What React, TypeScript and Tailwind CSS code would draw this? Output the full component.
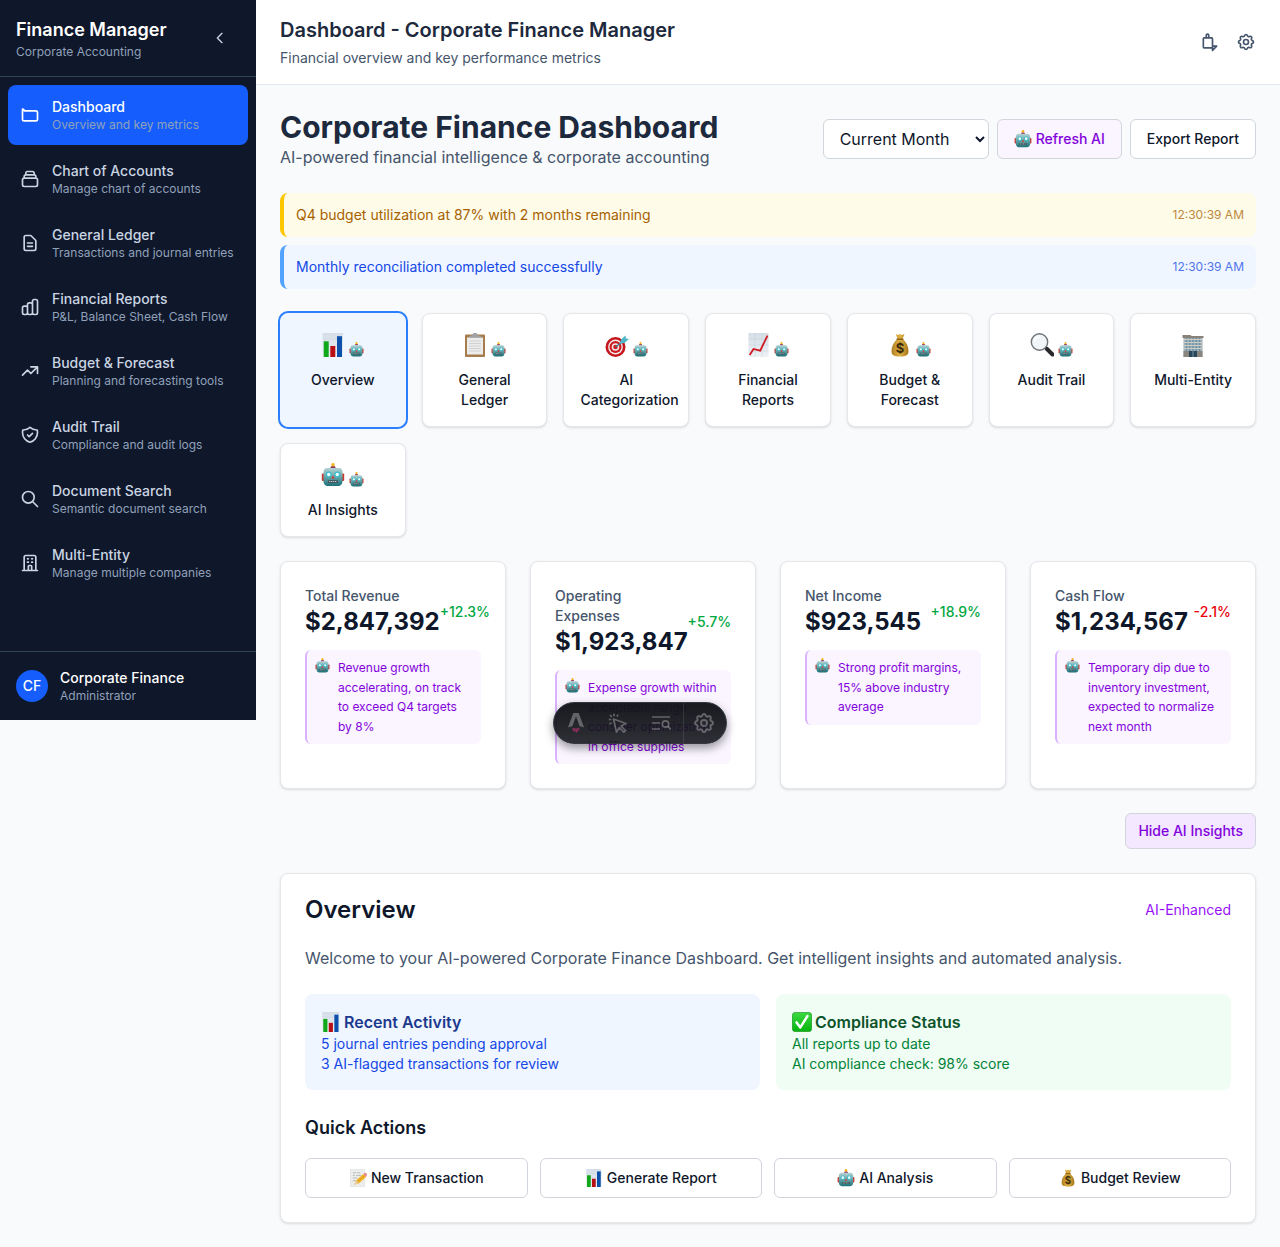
import React from "react";

const navItems = [
  { title: "Dashboard", sub: "Overview and key metrics", active: true, d: "M3 7v10a2 2 0 002 2h14a2 2 0 002-2V9a2 2 0 00-2-2H5a2 2 0 00-2-2z" },
  { title: "Chart of Accounts", sub: "Manage chart of accounts", d: "M19 11H5m14 0a2 2 0 012 2v6a2 2 0 01-2 2H5a2 2 0 01-2-2v-6a2 2 0 012-2m14 0V9a2 2 0 00-2-2M5 11V9a2 2 0 012-2m0 0V5a2 2 0 012-2h6a2 2 0 012 2v2M7 7h10" },
  { title: "General Ledger", sub: "Transactions and journal entries", d: "M9 12h6m-6 4h6m2 5H7a2 2 0 01-2-2V5a2 2 0 012-2h5.586a1 1 0 01.707.293l5.414 5.414a1 1 0 01.293.707V19a2 2 0 01-2 2z" },
  { title: "Financial Reports", sub: "P&L, Balance Sheet, Cash Flow", d: "M9 19v-6a2 2 0 00-2-2H5a2 2 0 00-2 2v6a2 2 0 002 2h2a2 2 0 002-2zm0 0V9a2 2 0 012-2h2a2 2 0 012 2v10m-6 0a2 2 0 002 2h2a2 2 0 002-2m0 0V5a2 2 0 012-2h2a2 2 0 012 2v14a2 2 0 01-2 2h-2a2 2 0 01-2-2z" },
  { title: "Budget & Forecast", sub: "Planning and forecasting tools", d: "M13 7h8m0 0v8m0-8l-8 8-4-4-6 6" },
  { title: "Audit Trail", sub: "Compliance and audit logs", d: "M9 12l2 2 4-4m5.618-4.016A11.955 11.955 0 0112 2.944a11.955 11.955 0 01-8.618 3.04A12.02 12.02 0 003 9c0 5.591 3.824 10.29 9 11.622 5.176-1.332 9-6.03 9-11.622 0-1.042-.133-2.052-.382-3.016z" },
  { title: "Document Search", sub: "Semantic document search", d: "M21 21l-6-6m2-5a7 7 0 11-14 0 7 7 0 0114 0z" },
  { title: "Multi-Entity", sub: "Manage multiple companies", d: "M19 21V5a2 2 0 00-2-2H7a2 2 0 00-2 2v16m14 0h2m-2 0h-5m-9 0H3m2 0h5M9 7h1m-1 4h1m4-4h1m-1 4h1m-5 10v-5a1 1 0 011-1h2a1 1 0 011 1v5m-4 0h4" },
];

const gearPath =
  "M10.325 4.317c.426-1.756 2.924-1.756 3.35 0a1.724 1.724 0 002.573 1.066c1.543-.94 3.31.826 2.37 2.37a1.724 1.724 0 001.065 2.572c1.756.426 1.756 2.924 0 3.35a1.724 1.724 0 00-1.066 2.573c.94 1.543-.826 3.31-2.37 2.37a1.724 1.724 0 00-2.572 1.065c-.426 1.756-2.924 1.756-3.35 0a1.724 1.724 0 00-2.573-1.066c-1.543.94-3.31-.826-2.37-2.37a1.724 1.724 0 00-1.065-2.572c-1.756-.426-1.756-2.924 0-3.35a1.724 1.724 0 001.066-2.573c-.94-1.543.826-3.31 2.37-2.37.996.608 2.296.07 2.572-1.065z M15 12a3 3 0 11-6 0 3 3 0 016 0z";

const notifyPath = "M15 17h5l-5 5v-5z M15 17V8a1 1 0 00-1-1H5a1 1 0 00-1 1v10a1 1 0 001 1h10 M7.500 7V4a1.500 1.500 0 013 0v3";

type Glyph = "chart" | "clipboard" | "target" | "trend" | "money" | "search" | "building" | "robot" | "memo" | "check";

const tabs: { icon: Glyph; label: string; ai: boolean; active?: boolean }[] = [
  { icon: "chart", label: "Overview", ai: true, active: true },
  { icon: "clipboard", label: "General Ledger", ai: true },
  { icon: "target", label: "AI Categorization", ai: true },
  { icon: "trend", label: "Financial Reports", ai: true },
  { icon: "money", label: "Budget & Forecast", ai: true },
  { icon: "search", label: "Audit Trail", ai: true },
  { icon: "building", label: "Multi-Entity", ai: false },
  { icon: "robot", label: "AI Insights", ai: true },
];

const metrics = [
  { label: "Total Revenue", value: "$2,847,392", change: "+12.3%", up: true, note: "Revenue growth accelerating, on track to exceed Q4 targets by 8%" },
  { label: "Operating Expenses", value: "$1,923,847", change: "+5.7%", up: true, note: "Expense growth within acceptable range, consider optimization in office supplies" },
  { label: "Net Income", value: "$923,545", change: "+18.9%", up: true, note: "Strong profit margins, 15% above industry average" },
  { label: "Cash Flow", value: "$1,234,567", change: "-2.1%", up: false, note: "Temporary dip due to inventory investment, expected to normalize next month" },
];

const quickActions: { icon: Glyph; label: string }[] = [
  { icon: "memo", label: "New Transaction" },
  { icon: "chart", label: "Generate Report" },
  { icon: "robot", label: "AI Analysis" },
  { icon: "money", label: "Budget Review" },
];

function Icon({ d, className = "size-5" }: { d: string; className?: string }) {
  return (
    <svg viewBox="0 0 24 24" fill="none" stroke="currentColor" strokeWidth={2} strokeLinecap="round" strokeLinejoin="round" className={`shrink-0 ${className}`} aria-hidden="true">
      <path d={d} />
    </svg>
  );
}

const glyphs: Record<Glyph, React.ReactNode> = {
  chart: (
    <>
      <rect x="1.500" y="0" width="20.500" height="24" fill="url(#paper)" />
      <path d="M1.500 6h20.500M1.500 12h20.500M1.500 18h20.500" stroke="#c3cfda" strokeWidth=".4" />
      <rect x="2.700" y="8.300" width="5" height="15.700" fill="#10a81a" />
      <rect x="9.300" y="13" width="5" height="11" fill="#b80f14" />
      <rect x="16" y="3.200" width="5" height="20.800" fill="#0c50ac" />
    </>
  ),
  clipboard: (
    <>
      <rect x="2" y="1.500" width="20" height="22.500" rx="1" fill="#a67c4c" />
      <rect x="4" y="4.500" width="16" height="17" fill="#ececec" />
      <path d="M6 8h12M6 10.500h12M6 13h12M6 15.500h12M6 18h12" stroke="#d2d2d2" strokeWidth="1" />
      <path d="M6 4.500V3l3.500-.7a2.500 2.500 0 015 0L18 3v1.500z" fill="#9da3a8" />
    </>
  ),
  target: (
    <>
      <circle cx="10.500" cy="14" r="10" fill="#c4161c" />
      <circle cx="10.500" cy="14" r="7.400" fill="#f6e9e9" />
      <circle cx="10.500" cy="14" r="6" fill="#cc1c22" />
      <circle cx="10.500" cy="14" r="3.800" fill="#f6e9e9" />
      <circle cx="10.500" cy="14" r="2.300" fill="#cc1c22" />
      <path d="M10.500 14l9-7" stroke="#3f7f8c" strokeWidth="1.400" />
      <path d="M15 10.500l1-4 4.500-4 .5 3 3 .5-4.500 4z" fill="#4fb6c6" />
    </>
  ),
  trend: (
    <>
      <rect x="2.500" y="0" width="20" height="24" fill="url(#paper)" />
      <path d="M2.500 6h20M2.500 12h20M2.500 18h20M9 0v24M16 0v24" stroke="#bccad6" strokeWidth=".4" />
      <path d="M3.700 22l3.800-6 6.700 1.700L21.500 2.700" fill="none" stroke="#cf1820" strokeWidth="1.800" />
    </>
  ),
  money: (
    <>
      <path d="M8 1l2 1 2-1 2 1 2.500-1L14.500 6c4 3 6 7.500 6 12 0 4-2 5.500-8.500 5.500S3.500 22 3.500 18c0-4.500 2-9 6-12z" fill="url(#gold)" />
      <path d="M8.500 6.200h7" stroke="#8b5a15" strokeWidth="1.400" />
      <text x="12" y="20" textAnchor="middle" fontSize="13" fontWeight="700" fill="#3d2b08" fontFamily="Inter, sans-serif">$</text>
    </>
  ),
  search: (
    <>
      <path d="M16.500 15.500l6 6" stroke="#26282b" strokeWidth="4" strokeLinecap="round" />
      <circle cx="9.500" cy="9" r="8.200" fill="#f1f5f7" stroke="#6e7478" strokeWidth="1.400" />
      <path d="M4.500 8a5 5 0 015-4" stroke="#fff" strokeWidth="1.500" fill="none" />
    </>
  ),
  building: (
    <>
      <rect x="2.500" y="3" width="19" height="21" fill="#9fb1ba" />
      <path d="M5.500 4v14M8.700 4v14M12 4v14M15.300 4v14M18.500 4v14" stroke="#6d93aa" strokeWidth="1.500" />
      <path d="M2.500 6.500h19M2.500 9.500h19M2.500 12.500h19M2.500 15.500h19" stroke="#cfccc2" strokeWidth="1" />
      <path d="M1.500 2h8l1 1h12v2h-21z" fill="#8a8178" />
      <rect x="2.500" y="18" width="19" height="6" fill="#8a857f" />
      <rect x="8" y="18" width="8" height="6" fill="#27465a" />
      <path d="M12 18v6" stroke="#8fa3ad" strokeWidth=".8" />
    </>
  ),
  robot: (
    <>
      <rect x=".8" y="10.500" width="3" height="7.500" rx="1" fill="#c63a34" />
      <rect x="20.200" y="10.500" width="3" height="7.500" rx="1" fill="#c63a34" />
      <path d="M9.300 5.500C9.300 3.500 10.500 3 12 3s2.700.5 2.700 2.500z" fill="#8c3b60" />
      <circle cx="12" cy="1.800" r="1.700" fill="#f6b21c" />
      <path d="M6 5h12c2.500 0 3.500 2 3.500 4.500V18c0 3.500-2 5-4.500 5H7c-2.500 0-4.500-1.500-4.500-5V9.500C2.500 7 3.500 5 6 5z" fill="url(#teal)" />
      <circle cx="7.700" cy="11.500" r="2.900" fill="#39bccb" />
      <circle cx="16.300" cy="11.500" r="2.900" fill="#39bccb" />
      <circle cx="7.700" cy="11.500" r="1.700" fill="#f1ffff" />
      <circle cx="16.300" cy="11.500" r="1.700" fill="#f1ffff" />
      <path d="M12 12.500l1.600 3h-3.200z" fill="#d9332d" />
      <rect x="7" y="17.300" width="10" height="2.600" rx="1" fill="#3d4e54" />
      <path d="M8 18.600h8" stroke="#c9d6d6" strokeWidth="1" strokeDasharray="1.400 .6" />
    </>
  ),
  memo: (
    <>
      <rect x="2" y="0" width="18.500" height="24" fill="#eceded" stroke="#d3d3d3" strokeWidth=".6" />
      <path d="M5 5h5M11 5h4M5 8.500h3M9.500 8.500h7M5 12h6M5 15.500h4" stroke="#a9a9a9" strokeWidth="1" />
      <path d="M7 21l2.500-6L19 6.500l4 4L13.500 19z" fill="#f3b72d" />
      <path d="M9.500 15l4 4L7 21z" fill="#e8cda2" />
      <path d="M11.500 17l9.500-8.500" stroke="#cf8e14" strokeWidth="1.200" />
      <path d="M19 6.500l1.500-1.300a2.500 2.500 0 013 3.800L23 10.500z" fill="#e88c93" />
    </>
  ),
  check: (
    <>
      <rect x=".5" y=".5" width="23" height="23" rx="3.500" fill="url(#green)" stroke="#0a8f12" strokeWidth=".8" />
      <path d="M5.500 12.500l4.500 6L18.500 5" fill="none" stroke="#fff" strokeWidth="3" strokeLinecap="round" strokeLinejoin="round" />
    </>
  ),
};

function Emoji({ name, className }: { name: Glyph; className: string }) {
  return (
    <svg viewBox="0 0 24 24" className={`shrink-0 ${className}`} role="img" aria-label={name}>
      {glyphs[name]}
    </svg>
  );
}

function Gradients() {
  return (
    <svg className="absolute size-0" aria-hidden="true">
      <defs>
        <linearGradient id="paper" x1="0" y1="0" x2="0" y2="1">
          <stop offset="0" stopColor="#d5dee7" />
          <stop offset="1" stopColor="#edf2f6" />
        </linearGradient>
        <linearGradient id="gold" x1="0" y1="0" x2="1" y2="0">
          <stop offset="0" stopColor="#b07f22" />
          <stop offset=".5" stopColor="#e0b446" />
          <stop offset="1" stopColor="#a87518" />
        </linearGradient>
        <linearGradient id="teal" x1="0" y1="0" x2="0" y2="1">
          <stop offset="0" stopColor="#b5d3d5" />
          <stop offset=".5" stopColor="#66a5aa" />
          <stop offset="1" stopColor="#1d7078" />
        </linearGradient>
        <linearGradient id="green" x1="0" y1="0" x2="0" y2="1">
          <stop offset="0" stopColor="#3ed943" />
          <stop offset="1" stopColor="#05b30d" />
        </linearGradient>
      </defs>
    </svg>
  );
}

function Sidebar() {
  return (
    <aside className="flex h-[720px] w-64 shrink-0 flex-col bg-slate-900 text-white">
      <div className="flex items-center justify-between border-b border-slate-700 p-4">
        <div>
          <h2 className="text-lg font-semibold">Finance Manager</h2>
          <p className="text-xs text-slate-400">Corporate Accounting</p>
        </div>
        <button type="button" aria-label="Collapse sidebar" className="mr-2 p-1 text-slate-300">
          <Icon d="M15 19l-7-7 7-7" className="size-4" />
        </button>
      </div>
      <nav className="flex-1 space-y-1 p-2">
        {navItems.map((item) => (
          <a key={item.title} href="#" className={`flex items-center gap-3 rounded-lg p-3 ${item.active ? "bg-[#155dfc] text-white" : "text-slate-300"}`}>
            <Icon d={item.d} />
            <span className="min-w-0">
              <span className="block text-sm font-medium">{item.title}</span>
              <span className="block text-xs whitespace-nowrap text-slate-400">{item.sub}</span>
            </span>
          </a>
        ))}
      </nav>
      <div className="flex items-center gap-3 border-t border-slate-700 p-4">
        <div className="flex size-8 items-center justify-center rounded-full bg-[#155dfc] text-sm font-medium">CF</div>
        <div>
          <p className="text-sm font-medium">Corporate Finance</p>
          <p className="text-xs text-slate-400">Administrator</p>
        </div>
      </div>
    </aside>
  );
}

function Tabs() {
  return (
    <div className="grid grid-cols-7 gap-4">
      {tabs.map((t) => (
        <button
          key={t.label}
          type="button"
          className={`flex flex-col items-stretch rounded-lg border p-4 text-center shadow-sm ${t.active ? "border-blue-50 bg-blue-50 ring-2 ring-blue-500" : "border-gray-200 bg-white"}`}
        >
          <span className="mb-2 flex h-8 items-end justify-center gap-1 pb-[5px]">
            <Emoji name={t.icon} className="size-6" />
            {t.ai && <Emoji name="robot" className="size-[15px]" />}
          </span>
          <span className="text-sm font-medium text-slate-900">{t.label}</span>
        </button>
      ))}
    </div>
  );
}

function Metrics() {
  return (
    <div className="grid grid-cols-4 gap-6">
      {metrics.map((m) => (
        <section key={m.label} className="rounded-lg border border-gray-200 bg-white p-6 shadow-sm">
          <div className="flex items-center justify-between">
            <div>
              <p className="text-sm font-medium text-slate-600">{m.label}</p>
              <p className="text-2xl font-bold text-slate-900">{m.value}</p>
            </div>
            <div className={`text-sm font-medium ${m.up ? "text-green-600" : "text-red-600"}`}>{m.change}</div>
          </div>
          <div className="mt-3 flex items-start gap-2 rounded-md border-l-2 border-purple-300 bg-purple-50 p-2 text-xs text-purple-700">
            <Emoji name="robot" className="size-[15px]" />
            <p className="leading-relaxed">{m.note}</p>
          </div>
        </section>
      ))}
    </div>
  );
}

function DevToolbar() {
  return (
    <div className="absolute top-[702px] left-1/2 flex h-[42px] w-[174px] -translate-x-1/2 items-center overflow-hidden rounded-full border border-[#343841] bg-linear-to-b from-[#13151a]/98 to-[#13151a]/88 text-white/30 shadow-[0_4px_10px_rgba(0,0,0,0.4)]">
      <button type="button" aria-label="Menu" className="flex h-full w-11 items-center justify-center">
        <svg viewBox="0 0 16 20" className="h-5 w-4" aria-hidden="true">
          <path fill="currentColor" d="M5.300 0h5.400L16 14.400c-1.400-.6-2.900-.9-4.300-1.100L8 3.600 4.300 13.300C2.900 13.500 1.400 13.800 0 14.400z" />
          <path fill="#a8326a" fillOpacity="0.7" d="M4.500 14.500c2 1.200 5 1.200 7 0 .4 2-.6 3-1.800 3.900-.7.500-1 1-.9 1.600-1.500-.5-1.500-1.800-1.300-2.500-.8.300-1 .9-1 1.500-1.600-.9-2.400-2.500-2-4.500z" />
        </svg>
      </button>
      <button type="button" aria-label="Inspect" className="flex h-full w-10 items-center justify-center">
        <svg viewBox="0 0 20 20" fill="none" stroke="currentColor" strokeWidth="1.700" strokeLinejoin="round" className="size-5" aria-hidden="true">
          <path d="M5.500 6l12.500 4.500-5 2.500 4.500 4.500-1.700 1.700-4.500-4.500L8.500 19z M6 .8v2.500 M.8 6.500h2.500 M2 2l1.800 1.800 M10 1.500L9 3.700 M1.500 11l2-1" />
        </svg>
      </button>
      <button type="button" aria-label="Audit" className="flex h-full flex-1 items-center justify-center">
        <svg viewBox="0 0 20 16" fill="none" stroke="currentColor" strokeWidth="1.700" className="h-4 w-5" aria-hidden="true">
          <path d="M1 2h18 M1 8h8 M1 14h8" />
          <circle cx="14.500" cy="9" r="3.200" />
          <path d="M16.800 11.300L20 14.500" />
        </svg>
      </button>
      <button type="button" aria-label="Settings" className="flex h-full w-[43px] items-center border-l border-white/10 pl-2">
        <Icon d={gearPath} className="size-6" />
      </button>
    </div>
  );
}

export default function App() {
  return (
    <div className="relative flex min-h-screen items-start bg-[#f9fafb] font-['Inter',sans-serif] text-slate-900">
      <Gradients />
      <Sidebar />
      <div className="min-w-0 flex-1">
        <header className="flex items-center justify-between border-b border-slate-200 bg-white px-6 py-4">
          <div>
            <h1 className="text-xl font-semibold text-slate-800">Dashboard - Corporate Finance Manager</h1>
            <p className="mt-1 text-sm text-slate-600">Financial overview and key performance metrics</p>
          </div>
          <div className="flex items-center gap-4 text-slate-600">
            <button type="button" aria-label="Notifications"><Icon d={notifyPath} /></button>
            <button type="button" aria-label="Settings"><Icon d={gearPath} /></button>
          </div>
        </header>

        <main className="space-y-6 p-6">
          <div className="flex items-center justify-between">
            <div>
              <h1 className="text-3xl font-bold text-slate-800">Corporate Finance Dashboard</h1>
              <p className="text-slate-600">AI-powered financial intelligence &amp; corporate accounting</p>
            </div>
            <div className="flex gap-2">
              <select aria-label="Period" defaultValue="Current Month" className="h-10 w-[166px] rounded-md border border-gray-300 bg-white px-3 text-base text-slate-900">
                <option>Current Month</option>
                <option>Last Month</option>
                <option>Current Quarter</option>
                <option>Current Year</option>
              </select>
              <button type="button" className="flex h-10 items-center gap-1 rounded-md border border-gray-300 bg-purple-50 px-4 text-sm font-medium text-purple-700">
                <Emoji name="robot" className="size-[18px]" />
                Refresh AI
              </button>
              <button type="button" className="h-10 rounded-md border border-gray-300 bg-white px-4 text-sm font-medium">Export Report</button>
            </div>
          </div>

          <div className="space-y-2">
            <div className="flex items-center justify-between rounded-lg border-l-4 border-yellow-400 bg-yellow-50 p-3 text-yellow-700">
              <p className="text-sm">Q4 budget utilization at 87% with 2 months remaining</p>
              <time className="text-xs opacity-75">12:30:39 AM</time>
            </div>
            <div className="flex items-center justify-between rounded-lg border-l-4 border-blue-400 bg-blue-50 p-3 text-blue-700">
              <p className="text-sm">Monthly reconciliation completed successfully</p>
              <time className="text-xs opacity-75">12:30:39 AM</time>
            </div>
          </div>

          <Tabs />
          <Metrics />

          <div className="flex justify-end">
            <button type="button" className="h-9 rounded-md border border-gray-300 bg-purple-100 px-3 text-sm font-medium text-purple-700">Hide AI Insights</button>
          </div>

          <section className="space-y-6 rounded-lg border border-gray-200 bg-white p-6 shadow-sm">
            <div className="flex items-center justify-between">
              <h2 className="text-2xl leading-none font-semibold">Overview</h2>
              <span className="text-sm leading-none text-purple-600">AI-Enhanced</span>
            </div>
            <p className="text-slate-600">Welcome to your AI-powered Corporate Finance Dashboard. Get intelligent insights and automated analysis.</p>
            <div className="grid grid-cols-2 gap-4">
              <div className="rounded-lg bg-blue-50 p-4 text-sm text-blue-700">
                <h3 className="flex items-center gap-[3px] text-base font-semibold text-blue-900">
                  <Emoji name="chart" className="size-5" />
                  Recent Activity
                </h3>
                <p>5 journal entries pending approval</p>
                <p>3 AI-flagged transactions for review</p>
              </div>
              <div className="rounded-lg bg-green-50 p-4 text-sm text-green-700">
                <h3 className="flex items-center gap-[3px] text-base font-semibold text-green-900">
                  <Emoji name="check" className="size-5" />
                  Compliance Status
                </h3>
                <p>All reports up to date</p>
                <p>AI compliance check: 98% score</p>
              </div>
            </div>
            <div>
              <h3 className="mb-4 text-lg font-semibold">Quick Actions</h3>
              <div className="grid grid-cols-4 gap-3">
                {quickActions.map((a) => (
                  <button key={a.label} type="button" className="flex h-10 items-center justify-center gap-1 rounded-md border border-gray-300 bg-white px-4 text-sm font-medium">
                    <Emoji name={a.icon} className="size-[18px]" />
                    {a.label}
                  </button>
                ))}
              </div>
            </div>
          </section>
        </main>
      </div>
      <DevToolbar />
    </div>
  );
}
